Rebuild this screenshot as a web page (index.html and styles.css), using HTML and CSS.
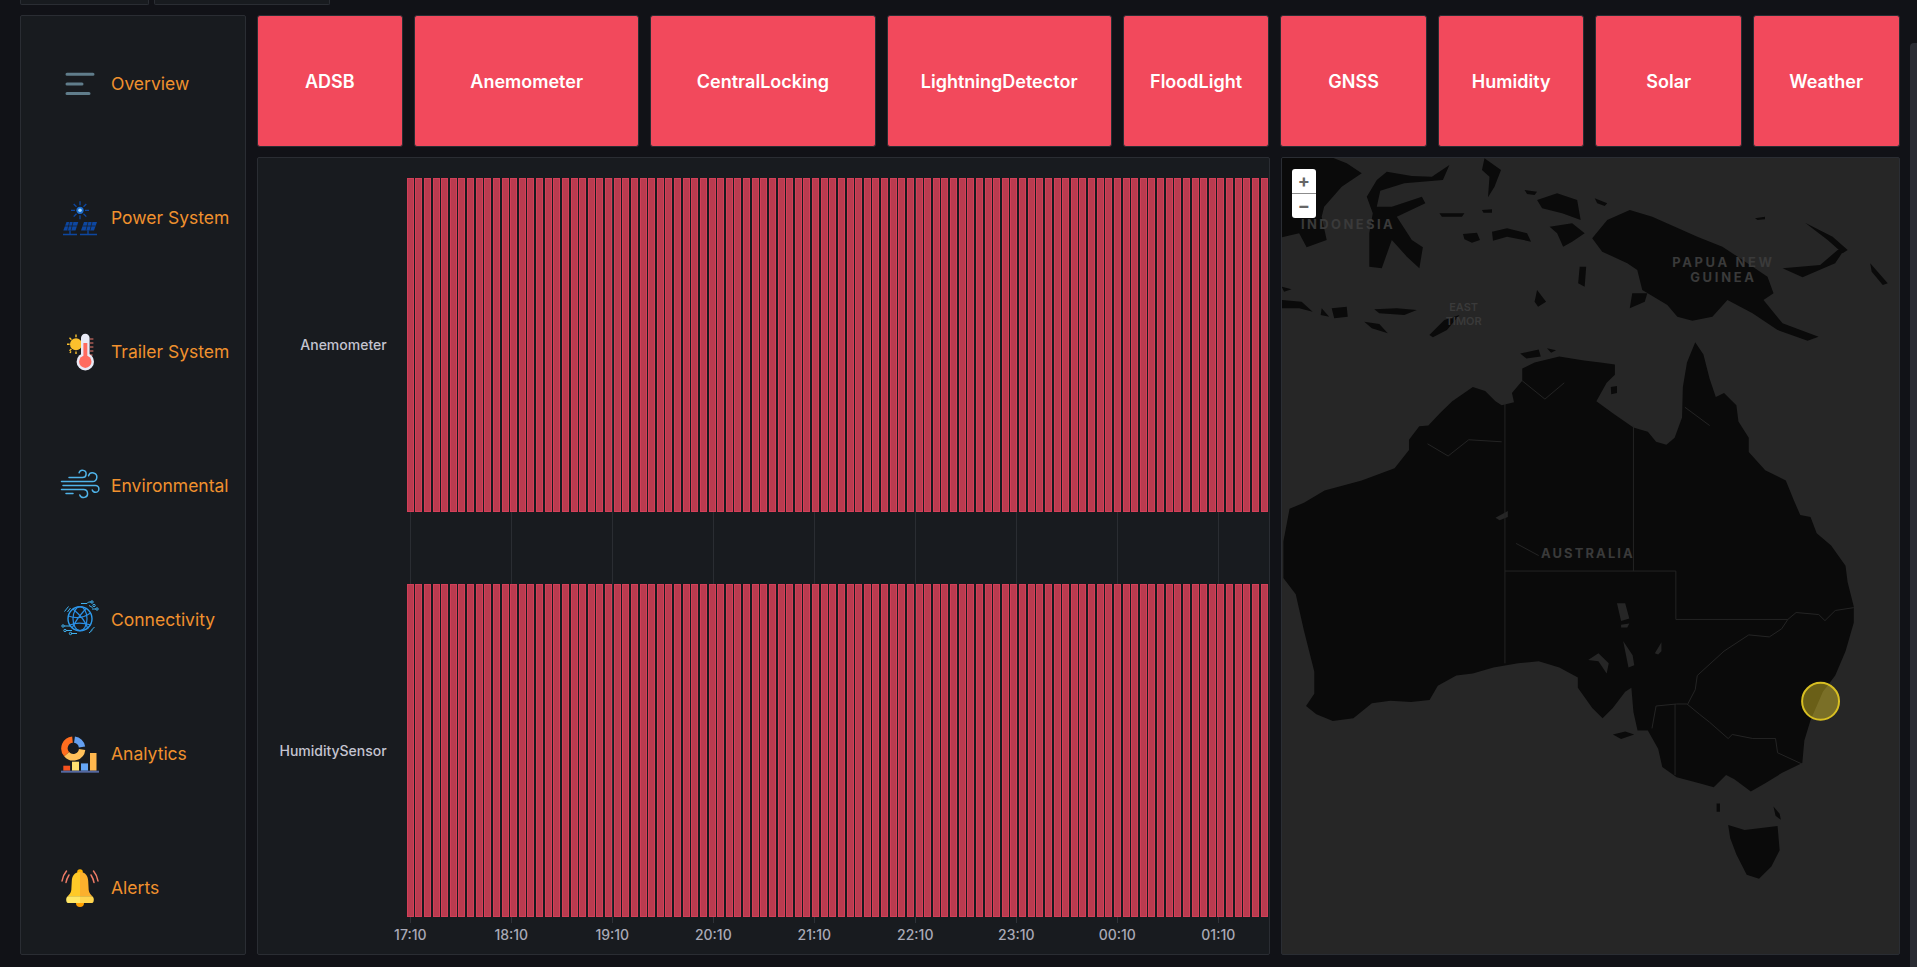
FILE: index.html
```html
<!DOCTYPE html>
<html lang="en">
<head>
  <meta charset="UTF-8" />
  <title>Trailer Overview</title>
  <link rel="stylesheet" href="styles.css">
</head>
<body>
  <div class="top-stubs">
    <div class="stub stub-a"></div>
    <div class="stub stub-b"></div>
  </div>

  <div class="dashboard">
    <nav class="sidebar">
      <a class="nav-item">
        <svg class="nav-icon" viewBox="0 0 40 40">
          <g fill="none" stroke="#607d8b" stroke-width="3" stroke-linecap="round">
            <path d="M7 11.3h26M7 21h15M7 30.6h22" />
          </g>
        </svg>
        Overview
      </a>
      <a class="nav-item">
        <svg class="nav-icon" viewBox="0 0 40 40">
          <g stroke="#0d47a1" stroke-width="1.3" fill="none">
            <path d="M20 4.3v4M20 18.3v4M11 13.3h4M25 13.3h4M13.7 7l2.8 2.8M23.5 16.8l2.8 2.8M26.3 7l-2.8 2.8M16.5 16.8l-2.8 2.8" />
          </g>
          <circle cx="20" cy="13.3" r="3.6" fill="#1e6fd0" />
          <circle cx="20" cy="13.3" r="1.8" fill="#9fd3fa" />
          <polygon points="3.3,33.6 6.5,25 18.3,25 15.5,33.6" fill="#0d47a1" />
          <polygon points="21,33.6 24,25 37,25 34,33.6" fill="#0d47a1" />
          <path d="M5 29h12M22.5 29h13M9.5 25l-2 8.6M13 25l-2 8.6M28 25l-2 8.6M32 25l-2 8.6" stroke="#181b1f" stroke-width=".7" />
          <path d="M10 33.6v3.4M28 33.6v3.4M3 37.5h14M20 37.5h17" stroke="#0d47a1" stroke-width="1.3" />
        </svg>
        Power System
      </a>
      <a class="nav-item">
        <svg class="nav-icon" viewBox="0 0 40 40">
          <path d="M16 3.6v2.6M7 13.3h2.6M9.5 6.8l1.9 1.9M9.5 19.8l1.9-1.9M16 20.4v2.6M10 22l1-1.6" stroke="#fbc02d" stroke-width="1.4" fill="none" />
          <circle cx="16" cy="13.3" r="6" fill="#fbc02d" />
          <path d="M30 8h3.4M30 12h3.4M30 16h3.4M30 20h3.4M30 24h2.6" stroke="#ef7a6d" stroke-width="1" />
          <rect x="21" y="2.7" width="8.6" height="28" rx="4.3" fill="#e8eaf6" />
          <circle cx="25.3" cy="30.7" r="8.7" fill="#e8eaf6" />
          <rect x="23.4" y="12" width="3.9" height="18" fill="#ff6b5f" />
          <circle cx="25.3" cy="30.7" r="6.2" fill="#ff6b5f" />
        </svg>
        Trailer System
      </a>
      <a class="nav-item">
        <svg class="nav-icon" viewBox="0 0 40 40">
          <g fill="none" stroke="#4fb3e8" stroke-width="1.5" stroke-linecap="round">
            <path d="M9 12.5h13.5a3.6 3.6 0 1 0-3.4-4.8" />
            <path d="M1.5 16.5h31a4.3 4.3 0 1 0-4-5.8" />
            <path d="M3 20.5h32.5a3.4 3.4 0 0 1 0 6.8 3.3 3.3 0 0 1-3.2-2.3" />
            <path d="M1.5 24.5h22a4 4 0 1 1-3.7 5.4" />
            <path d="M6 28.5h7" />
          </g>
        </svg>
        Environmental
      </a>
      <a class="nav-item">
        <svg class="nav-icon" viewBox="0 0 40 40">
          <g fill="none" stroke="#2b8fe6" stroke-width="1.2">
            <circle cx="20" cy="19.7" r="12" stroke="#2f9cec" stroke-width="1.4" />
            <path d="M13 10c6 5 13 13 15 20M26 9.5C22 14 15 22 12 29.5M8.5 17c8 3 15 2 22-3M10 26c7-3 14-2 21 0" />
            <ellipse cx="20" cy="19.7" rx="7" ry="12" />
          </g>
          <g fill="none" stroke="#3fb0ee" stroke-width="1">
            <path d="M21 4.5h6l1.5-1.5h3M29 6.5l3.5 2M32 10h4M4 27h6M6 31.5h6M11 34.5h6M4.500 12.500l4-5M7.500 13l3-4M31 31.500l3.500-3.500M29 34l3.500-3" />
            <circle cx="32" cy="3" r="1.200" />
            <circle cx="34" cy="6.500" r="1.200" />
            <circle cx="37" cy="10" r="1.200" />
            <circle cx="3" cy="27" r="1.200" />
            <circle cx="5" cy="31.500" r="1.200" />
            <circle cx="10.500" cy="34.500" r="1.200" />
          </g>
        </svg>
        Connectivity
      </a>
      <a class="nav-item">
        <svg class="nav-icon" viewBox="0 0 40 40">
          <g fill="none" stroke-width="6.4">
            <path d="M14.500 6.700A8.800 8.800 0 0 1 22 14" stroke="#64a0f0" />
            <path d="M22.100 16.500A8.800 8.800 0 0 1 6.600 21.100" stroke="#ffc05a" />
            <path d="M6.600 21.100A8.800 8.800 0 0 1 12.500 6.600" stroke="#ff6d1f" />
          </g>
          <rect x="3.300" y="32.700" width="6.800" height="5" fill="#f4511e" />
          <rect x="12" y="28.700" width="7" height="9" fill="#ffe070" />
          <rect x="21" y="30.400" width="7" height="7.300" fill="#64a5f5" />
          <rect x="30" y="20" width="6.500" height="17.700" fill="#ffb74d" />
          <rect x="1" y="37.700" width="38" height="2" fill="#5468a0" />
        </svg>
        Analytics
      </a>
      <a class="nav-item">
        <svg class="nav-icon" viewBox="0 0 40 40">
          <g fill="none" stroke="#ee7b66" stroke-width="1.500" stroke-linecap="round">
            <path d="M2 14c.500-4 2-7 4.500-10M6 15.500c.400-3 1.500-5 3-7.500M38 14c-.500-4-2-7-4.500-10M34 15.500c-.400-3-1.500-5-3-7.500" />
          </g>
          <circle cx="20" cy="36" r="4" fill="#ffa000" />
          <circle cx="20" cy="5" r="2.800" fill="#ffb300" />
          <path d="M20 5c-5.500 0-8 4-8.200 9l-.5 9c-.2 3-2.300 5-4 6.500h12.700z" fill="#ffca28" />
          <path d="M20 5c5.500 0 8 4 8.200 9l.5 9c.2 3 2.300 5 4 6.500H20z" fill="#fbb02d" />
          <path d="M8.500 29.300h11.500V36H8c-2.500 0-2.500-6.700.5-6.700z" fill="#ffe766" />
          <path d="M31.500 29.300H20V36h12c2.500 0 2.500-6.700-.5-6.700z" fill="#ffd54f" />
        </svg>
        Alerts
      </a>
    </nav>

    <main class="content">
      <div class="status-row">
        <div class="tile">ADSB</div>
        <div class="tile tile-wide">Anemometer</div>
        <div class="tile tile-wide">CentralLocking</div>
        <div class="tile tile-wide">LightningDetector</div>
        <div class="tile">FloodLight</div>
        <div class="tile">GNSS</div>
        <div class="tile">Humidity</div>
        <div class="tile">Solar</div>
        <div class="tile">Weather</div>
      </div>

      <div class="panels">
        <section class="panel timeline">
          <div class="timeline-labels">
            <div class="row-label">Anemometer</div>
            <div class="row-label">HumiditySensor</div>
          </div>
          <div class="timeline-chart">
            <div class="plot">
              <div class="track" data-bars="100"></div>
              <div class="track" data-bars="100"></div>
            </div>
            <div class="time-axis">
              <span>17:10</span>
              <span>18:10</span>
              <span>19:10</span>
              <span>20:10</span>
              <span>21:10</span>
              <span>22:10</span>
              <span>23:10</span>
              <span>00:10</span>
              <span>01:10</span>
            </div>
          </div>
        </section>

        <section class="panel map-panel">
          <svg class="map" viewBox="1281 158 618 796" preserveAspectRatio="none">
            <!-- north: same scale as the crop I traced it from -->
            <g class="land" transform="translate(1130 0) scale(.502 .3333)">
              <path d="M300 472H400L430 490 460 520 420 560 385 620 380 650 390 720 350 742 335 700 300 712Z" />
              <path d="M510 515L560 528 600 530 635 495 622 540 545 550 497 572 490 620 520 620 580 590 587 610 530 650 560 720 582 742 575 805 550 770 520 720 500 805 475 800 475 700 482 640 470 590 490 540Z" />
              <path d="M705 475L738 510 725 560 712 592 715 530 700 510Z" />
              <path d="M785 570L810 575 805 585 790 582ZM615 640L665 640 660 650 620 650ZM925 595L950 610 945 618 930 610ZM1245 655L1265 650 1265 658 1250 660ZM700 630L720 628 720 638 703 638Z" />
              <path d="M720 695L750 685 790 700 798 725 750 710 722 722Z" />
              <path d="M662 702L690 698 696 720 680 728 665 718Z" />
              <path d="M810 600L850 580 890 600 897 660 860 640 820 625Z" />
              <path d="M835 680L880 670 905 700 880 725 862 740 850 700Z" />
              <path d="M920 715L950 660 995 630 1040 650 1085 680 1130 710 1180 740 1230 790 1270 830 1282 880 1262 900 1300 970 1372 1010 1350 1022 1290 990 1240 940 1190 900 1160 950 1120 962 1090 950 1070 915 1020 870 1010 810 990 790 940 755Z" />
              <path d="M1000 880L1030 880 1025 905 995 925Z" />
              <path d="M1300 805L1375 795 1410 750 1425 745 1405 790 1340 832Z" />
              <path d="M1345 668L1400 710 1430 750 1420 760 1390 720Z" />
              <path d="M1475 790L1510 850 1500 855 1478 815Z" />
              <path d="M300 860L320 868 305 875ZM300 900L340 905 362 935 335 925 300 925ZM380 925L395 950 378 945ZM400 925L430 920 432 950 405 955ZM485 928L530 925 570 930 545 945 495 940ZM465 965L495 972 512 1000 480 985Z" />
              <path d="M595 1005L625 960 655 945 630 990 602 1012Z" />
              <path d="M810 870L828 905 812 920 805 905ZM895 800L908 800 905 860 892 850Z" />
            </g>

            <g transform="translate(1270 330) scale(.4127 .4065)">
              <path class="land" d="M335 270L360 237 382 235 410 205 440 175 490 140 520 150 545 175 560 185 590 178 585 155 610 125 610 95 640 80 700 65 760 75 800 80 835 85 835 110 815 130 790 175 830 205 880 240 915 250 935 275 960 282 980 265 998 215 1000 140 1010 80 1030 30 1050 60 1065 120 1080 165 1100 155 1130 185 1135 225 1160 265 1160 300 1200 345 1250 370 1270 420 1285 455 1310 460 1325 500 1360 530 1395 580 1400 620 1415 680 1415 720 1395 790 1370 850 1340 890 1310 960 1295 1010 1290 1065 1240 1090 1200 1115 1165 1135 1125 1105 1105 1095 1075 1125 1040 1115 985 1100 950 1075 940 1030 915 985 890 985 880 940 875 880 860 890 830 930 805 955 780 930 745 880 745 855 700 830 650 815 600 820 540 830 490 845 450 850 405 875 385 910 340 915 290 912 245 918 200 955 150 962 110 945 85 925 105 895 105 840 80 740 60 650 30 610 30 520 45 440 80 425 130 395 220 370 300 340 335 295Z" />
              <path class="land" d="M1110 1218L1150 1230 1230 1220 1235 1280 1215 1320 1185 1350 1155 1340 1130 1290 1115 1250Z" />
              <path class="land" d="M830 995L860 988 882 995 850 1006ZM1082 1165L1090 1165 1090 1185 1082 1185ZM1220 1172L1235 1190 1238 1205 1225 1195ZM605 58L650 48 655 65 620 70ZM670 45L692 50 680 56ZM825 140L840 138 840 155 826 158Z" />
              <path class="lake" d="M840 672L860 672 870 710 850 716ZM855 765L878 800 882 825 868 830ZM770 812L795 795 820 820 815 845 795 815ZM932 795L948 768 948 790 940 798ZM545 462L575 445 575 460 555 468ZM850 725L870 722 865 732 850 732Z" />
              <path class="border" d="M568 180V820M880 235V593M568 593H983V712M983 712H1255M981 920V1095M1255 712L1275 695 1330 700 1345 715 1370 690 1415 683M1010 920L1040 945 1065 965 1110 1005 1120 995 1170 1005 1225 1005 1230 1040 1290 1068M1012 920L1030 885 1035 850 1100 790 1160 750 1210 755 1240 735 1255 712M380 280L430 310 480 270 560 275M610 125L665 170 712 130M1005 190L1065 235M935 925L925 980M935 925L985 920 1010 920M595 525L650 555" />
            </g>

            <text class="map-label" x="1346" y="229" textLength="92">INDONESIA</text>
            <text class="map-label" x="1722" y="267" textLength="100">PAPUA NEW</text>
            <text class="map-label" x="1722" y="282" textLength="64">GUINEA</text>
            <text class="map-label map-label-small" x="1463" y="311">EAST</text>
            <text class="map-label map-label-small" x="1463" y="325">TIMOR</text>
            <text class="map-label" x="1586.500" y="558" textLength="92">AUSTRALIA</text>

            <circle class="marker" cx="1820.700" cy="701.300" r="18.500" />
          </svg>
          <div class="zoom-control">
            <button class="zoom-btn">+</button>
            <button class="zoom-btn">−</button>
          </div>
        </section>
      </div>
    </main>
  </div>

  <div class="scroll-thumb"></div>

  <script src="timeline.js"></script>
</body>
</html>
```

FILE: styles.css
```css
html,
body {
  height: 100%;
  overflow: hidden;
}

body {
  margin: 0;
  background-color: #111217;
  color: #ccccdc;
  font-family: "Inter", "Liberation Sans", sans-serif;
}

.top-stubs {
  display: flex;
  gap: 5px;
  height: 5px;
  padding-left: 20px;
}

.stub {
  background-color: #181b1f;
  border: 1px solid #2a2d33;
  border-top: none;
  border-radius: 0 0 2px 2px;
}

.stub-a {
  width: 127px;
}

.stub-b {
  width: 174px;
}

.dashboard {
  display: flex;
  gap: 11px;
  height: 940px;
  margin-top: 10px;
  padding: 0 17.5px 0 20px;
}

/* Left menu */
.sidebar {
  display: flex;
  flex-direction: column;
  flex: 0 0 225.5px;
  box-sizing: border-box;
  background-color: #181b1f;
  border: 1px solid #2a2d33;
  border-radius: 2px;
}

.nav-item {
  flex: 1;
  display: flex;
  align-items: center;
  gap: 11px;
  padding-left: 39px;
  color: #f0912e;
  font-size: 17.500px;
}

.nav-icon {
  flex: none;
  width: 40px;
  height: 40px;
}

.content {
  flex: 1;
  display: flex;
  flex-direction: column;
  gap: 10px;
  min-width: 0;
}

/* Status tiles */
.status-row {
  display: flex;
  gap: 11px;
  height: 132px;
}

.tile {
  flex: 146;
  min-width: 0;
  display: flex;
  align-items: center;
  justify-content: center;
  box-sizing: border-box;
  background-color: #f2495c;
  border: 1px solid #2a2d33;
  border-radius: 3px;
  color: #fff;
  font-size: 18px;
  font-weight: 600;
}

.tile-wide {
  flex: 225.500;
}

.panels {
  flex: 1;
  display: flex;
  gap: 11px;
  min-height: 0;
}

.panel {
  box-sizing: border-box;
  background-color: #181b1f;
  border: 1px solid #2a2d33;
  border-radius: 2px;
}

/* State timeline */
.timeline {
  flex: 0 0 1013px;
  display: flex;
  padding-top: 20px;
}

.timeline-labels {
  flex: 0 0 149.200px;
  box-sizing: border-box;
  display: flex;
  flex-direction: column;
  gap: 72px;
  height: 739px;
  padding-right: 20px;
}

.row-label {
  flex: 1;
  display: flex;
  align-items: center;
  justify-content: flex-end;
  font-size: 14px;
  font-weight: 500;
  color: #c4c4d0;
}

.timeline-chart {
  flex: 0 0 841.100px;
  display: flex;
  flex-direction: column;
}

.plot {
  display: flex;
  flex-direction: column;
  gap: 72px;
  height: 739px;
  background-image: repeating-linear-gradient(90deg, #2a2d32 0 1px, transparent 1px 101px);
  background-position: 3px 0;
}

.track {
  flex: 1;
  display: flex;
  justify-content: space-between;
}

.bar {
  flex: 0 0 7px;
  box-sizing: border-box;
  background-color: #b93b4f;
  border: 1px solid #d23f58;
}

.time-axis {
  display: flex;
  margin-left: -46.900px;
}

.time-axis span {
  flex: 0 0 101px;
  text-align: center;
  font-size: 14px;
  font-weight: 500;
  line-height: 17px;
  color: #a9a9b6;
}

.time-axis span::before {
  content: "";
  display: block;
  width: 1px;
  height: 6px;
  margin: 0 auto 3px;
  background-color: #2f3238;
}

/* Map */
.map-panel {
  flex: 1;
  position: relative;
  overflow: hidden;
  background-color: #262626;
}

.map {
  display: block;
  width: 100%;
  height: 100%;
}

.land {
  fill: #0a0a0a;
}

.lake {
  fill: #262626;
}

.border {
  fill: none;
  stroke: #242424;
  stroke-width: 1;
  vector-effect: non-scaling-stroke;
}

.map-label {
  fill: #3a3a3a;
  font-family: "Inter", sans-serif;
  font-size: 13px;
  font-weight: 700;
  text-anchor: middle;
}

.map-label-small {
  font-size: 11px;
  font-weight: 600;
}

.marker {
  fill: rgba(250, 222, 42, 0.4);
  stroke: #d8bf22;
  stroke-width: 2;
}

.zoom-control {
  position: absolute;
  top: 10.500px;
  left: 10px;
  width: 24px;
  border-radius: 3px;
  overflow: hidden;
}

.zoom-btn {
  display: block;
  width: 24px;
  height: 24.500px;
  padding: 0;
  border: none;
  background-color: #fff;
  color: #666;
  font-family: "Inter", sans-serif;
  font-size: 18px;
  font-weight: 700;
  line-height: 24px;
}

.zoom-btn + .zoom-btn {
  border-top: 1px solid #8c8c8c;
}

.scroll-thumb {
  position: absolute;
  top: 43px;
  right: 0;
  bottom: 0;
  width: 7px;
  background-color: #2a2c33;
  border-radius: 4px 0 0 0;
}
```

FILE: timeline.js
```js
// one bar per 5 minute sample
document.querySelectorAll('.track').forEach(track => {
  const count = Number(track.dataset.bars);
  for (let i = 0; i < count; i++) {
    const bar = document.createElement('div');
    bar.className = 'bar';
    track.appendChild(bar);
  }
});
```
